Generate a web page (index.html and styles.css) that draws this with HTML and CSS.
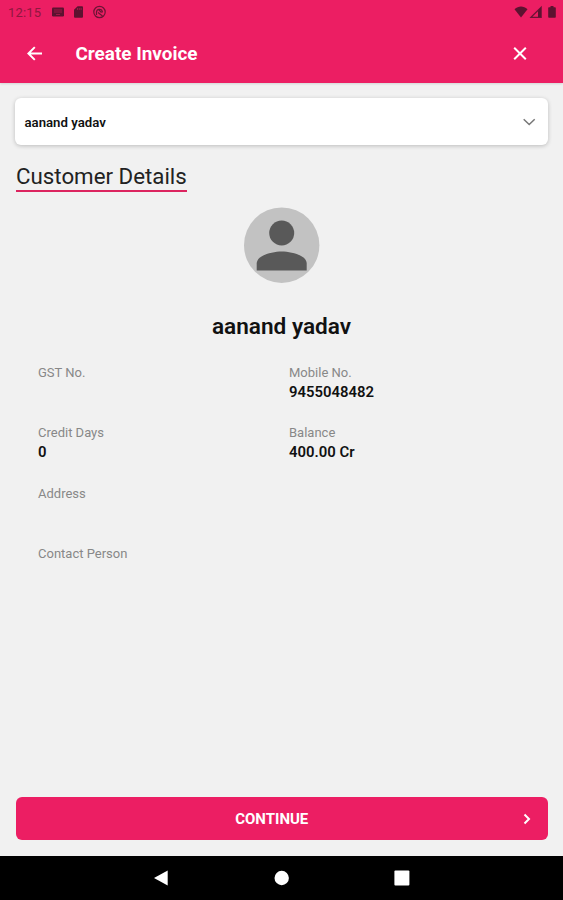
FILE: index.html
```html
<!DOCTYPE html>
<html lang="en">
<head>
    <meta charset="UTF-8">
    <meta name="viewport" content="width=device-width, initial-scale=1.0">
    <title>Create Invoice</title>
    <link rel="stylesheet" href="styles.css">
</head>
<body>
    <header>
        <div class="status-bar">
            <span class="clock">12:15</span>
            <svg class="status-left" width="56" height="16" viewBox="0 0 56 16">
                <rect x="1" y="3.5" width="12" height="9" rx="1.2"/>
                <path class="cut" d="M3 6h8M3 8h8M5 10.5h4"/>
                <path d="M26.6 2.2H31a1 1 0 0 1 1 1v9.6a1 1 0 0 1-1 1h-7a1 1 0 0 1-1-1V5.8z"/>
                <path class="cut" d="M26.5 4v2M28.3 4v2M30.1 4v2"/>
                <circle class="line" cx="48.5" cy="8" r="5.7"/>
                <path class="line" d="M47 8.500l4.500 3.500M45.500 11V8a3 3 0 0 1 5.800-.8v1.300M47.500 5.500l3 3"/>
            </svg>
            <svg class="status-right" width="44" height="16" viewBox="0 0 44 16">
                <path d="M0.5 5.2C4.5 1.6 9.5 1.6 13.5 5.2L7 13.6z"/>
                <path class="line" d="M17 13.3L27.2 3.2v10.1z"/>
                <path d="M24 6.500l3-3v9.500h-3z"/>
                <path d="M36.5 2h3v1.3h1.5a.8.8 0 0 1 .8.8v8.9a.8.8 0 0 1-.8.8h-6a.8.8 0 0 1-.8-.8V4.1a.8.8 0 0 1 .8-.8h1.5z"/>
            </svg>
        </div>
        <div class="app-bar">
            <svg class="back" width="16" height="16" viewBox="0 0 16 16">
                <path d="M15 7.5H1.5M7.8 1.1L1.4 7.5l6.4 6.4"/>
            </svg>
            <h1>Create Invoice</h1>
            <svg class="close" width="14" height="14" viewBox="0 0 14 14">
                <path d="M1.2 0.7l11.6 11.6M12.8 0.7L1.2 12.3"/>
            </svg>
        </div>
    </header>

    <main>
        <div class="select">
            <span>aanand yadav</span>
            <svg width="14" height="9" viewBox="0 0 14 9">
                <path d="M1.7 1.2L7.2 6.5l5.5-5.3"/>
            </svg>
        </div>

        <h2>Customer Details</h2>

        <div class="profile">
            <svg width="76" height="76" viewBox="0 0 76 76">
                <circle cx="37.7" cy="38.2" r="37.7" fill="#c2c2c2"/>
                <circle cx="37.7" cy="26" r="12.5" fill="#595959"/>
                <path d="M12.7 63.500v-7C12.7 48.5 27.7 44.5 37.7 44.5S62.7 48.5 62.7 56.5V63.500z" fill="#595959"/>
            </svg>
            <h3>aanand yadav</h3>
        </div>

        <div class="details">
            <div class="field">
                <div class="label">GST No.</div>
            </div>
            <div class="field">
                <div class="label">Mobile No.</div>
                <div class="value">9455048482</div>
            </div>
            <div class="field">
                <div class="label">Credit Days</div>
                <div class="value">0</div>
            </div>
            <div class="field">
                <div class="label">Balance</div>
                <div class="value">400.00 Cr</div>
            </div>
            <div class="field wide">
                <div class="label">Address</div>
            </div>
            <div class="field wide">
                <div class="label">Contact Person</div>
            </div>
        </div>

        <button type="button">
            <span>CONTINUE</span>
            <svg width="8" height="12" viewBox="0 0 8 12">
                <path d="M1.5 1.5L6 6l-4.5 4.5"/>
            </svg>
        </button>
    </main>

    <nav>
        <svg width="16" height="18" viewBox="0 0 16 18"><path d="M0 9L13.7 1.5v15z"/></svg>
        <svg width="16" height="18" viewBox="0 0 16 18"><circle cx="7.7" cy="9" r="7.2"/></svg>
        <svg width="16" height="18" viewBox="0 0 16 18"><rect x="0.4" y="1.5" width="15" height="15" rx="1"/></svg>
    </nav>
</body>
</html>
```

FILE: styles.css
```css
* {
    box-sizing: border-box;
}

body {
    display: flex;
    flex-direction: column;
    height: 900px;
    margin: 0;
    background-color: #f1f1f1;
    color: #111;
    font-family: Roboto, "Liberation Sans", sans-serif;
}

h1, h2, h3 {
    margin: 0;
}

svg {
    display: block;
    flex: none;
}

header {
    height: 83px;
    background-color: #ec1e63;
    box-shadow: 0 1px 2px rgba(0, 0, 0, 0.12);
}

.status-bar {
    display: flex;
    align-items: center;
    height: 24px;
    padding: 0 5px 0 8px;
    color: #8f173f;
}

.status-bar svg {
    fill: #5c1230;
}

.status-bar .line {
    fill: none;
    stroke: #6b1435;
    stroke-width: 1.2;
}

.status-bar .cut {
    fill: none;
    stroke: #b01a4c;
    stroke-width: 0.8;
}

.clock {
    width: 43px;
    font-size: 13px;
    letter-spacing: 0.2px;
}

.status-right {
    margin-left: auto;
}

.app-bar {
    display: flex;
    align-items: center;
    height: 59px;
    padding: 0 36px 0 27px;
}

.app-bar svg {
    fill: none;
    stroke: #fff;
    stroke-width: 2;
}

h1 {
    flex: 1;
    padding-left: 32.5px;
    color: #fff;
    font-size: 18.9px;
    font-weight: 700;
}

main {
    display: flex;
    flex: 1;
    flex-direction: column;
    padding: 15px 15px 16px;
}

.select {
    display: flex;
    align-items: center;
    justify-content: space-between;
    height: 47px;
    padding: 1px 12px 0 9.5px;
    border-radius: 6px;
    background-color: #fff;
    box-shadow: 0 1px 4px rgba(0, 0, 0, 0.22);
    font-size: 13.2px;
    font-weight: 600;
}

.select svg {
    fill: none;
    stroke: #777;
    stroke-width: 1.5;
}

h2 {
    align-self: flex-start;
    height: 30px;
    margin: 17px 0 0 1px;
    border-bottom: 2px solid #dc245f;
    color: #222;
    font-size: 22.3px;
    font-weight: 400;
    line-height: 29px;
}

.profile {
    display: flex;
    flex-direction: column;
    align-items: center;
    margin-top: 15px;
}

h3 {
    margin-top: 30px;
    font-size: 22.6px;
    font-weight: 600;
    line-height: 28px;
}

.details {
    display: grid;
    grid-template-columns: 251px 1fr;
    grid-auto-rows: 60.4px;
    margin: 22px 0 0 23px;
}

.wide {
    grid-column: 1 / -1;
}

.label {
    color: #888;
    font-size: 13px;
    line-height: 19px;
}

.value {
    font-size: 14.9px;
    font-weight: 600;
    line-height: 21px;
}

button {
    display: flex;
    align-items: center;
    height: 43px;
    margin: auto 0.5px 0 1px;
    padding: 0 17px;
    border: none;
    border-radius: 6px;
    background-color: #ec1e63;
    color: #fff;
    font-family: inherit;
    font-size: 15px;
    font-weight: 700;
}

button span {
    flex: 1;
    padding: 1px 12px 0 0;
    text-align: center;
}

button svg {
    fill: none;
    stroke: #fff;
    stroke-width: 2;
}

nav {
    display: flex;
    align-items: center;
    justify-content: center;
    gap: 104px;
    height: 44px;
    background-color: #000;
}

nav svg {
    fill: #fff;
}
```
